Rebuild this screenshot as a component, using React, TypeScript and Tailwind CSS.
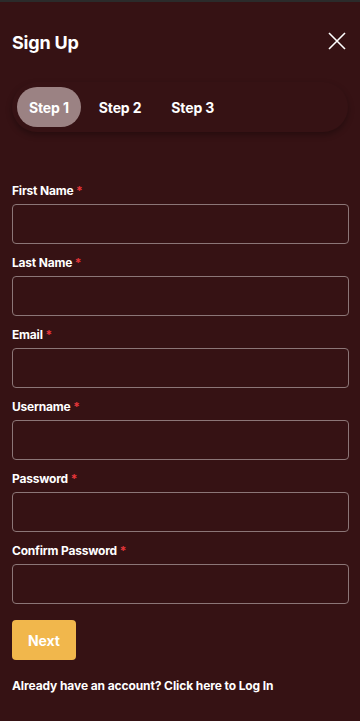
import { useState } from "react";

const fields = [
  { id: "firstName", label: "First Name", type: "text" },
  { id: "lastName", label: "Last Name", type: "text" },
  { id: "email", label: "Email", type: "email" },
  { id: "username", label: "Username", type: "text" },
  { id: "password", label: "Password", type: "password" },
  { id: "confirmPassword", label: "Confirm Password", type: "password" },
];

export default function App() {
  const [step, setStep] = useState(1);

  return (
    <div className="min-h-[721px] w-full bg-[#361214] border-t-2 border-[#2b2b2b] font-['Inter',sans-serif] text-white">
      {/* Header */}
      <div className="flex items-center justify-between pl-3 pr-3 pt-[29px] h-[70px] pb-[18px]">
        <h1 className="text-[18px] font-bold leading-6 tracking-[-0.2px]">Sign Up</h1>
        <button className="text-white -mt-[3px] mr-[1px]" aria-label="Close">
          <svg width="20" height="20" viewBox="0 0 20 20" fill="none" stroke="currentColor" strokeWidth="1.6">
            <path d="M2 2 L18 18 M18 2 L2 18" />
          </svg>
        </button>
      </div>

      {/* Steps */}
      <div className="mx-3 mt-[10px] flex gap-[6px] rounded-[26px] p-[5px] shadow-[0_3px_6px_rgba(0,0,0,0.3)]">
        {[1, 2, 3].map(n => (
          <button
            key={n}
            onClick={() => setStep(n)}
            className={`h-10 rounded-full px-3 text-[14px] font-bold tracking-[-0.15px] ${
              step === n ? "bg-[#9b8283]" : ""
            }`}
          >
            Step {n}
          </button>
        ))}
      </div>

      {/* Form */}
      <form className="mt-[50px] flex flex-col gap-[10px] pl-3 pr-[11px]">
        {fields.map(f => (
          <div key={f.id}>
            <label htmlFor={f.id} className="mb-1.5 mt-[1px] block h-4 text-[12px] font-bold leading-4 tracking-[-0.2px]">
              {f.label} <span className="text-[#e8363a]">*</span>
            </label>
            <input
              id={f.id}
              type={f.type}
              className="-mt-[1px] h-10 w-full rounded border border-[#8c7677] bg-transparent px-3 text-sm text-white outline-none"
            />
          </div>
        ))}

        <div className="mt-[6px]">
          <button
            type="button"
            className="h-10 rounded bg-[#f1b74c] px-[16px] text-[14px] font-bold tracking-[-0.1px] text-white"
          >
            Next
          </button>
        </div>

        <p className="mt-[8px] text-[12px] font-bold leading-4 tracking-[-0.1px]">
          Already have an account? Click here to Log In
        </p>
      </form>
    </div>
  );
}
